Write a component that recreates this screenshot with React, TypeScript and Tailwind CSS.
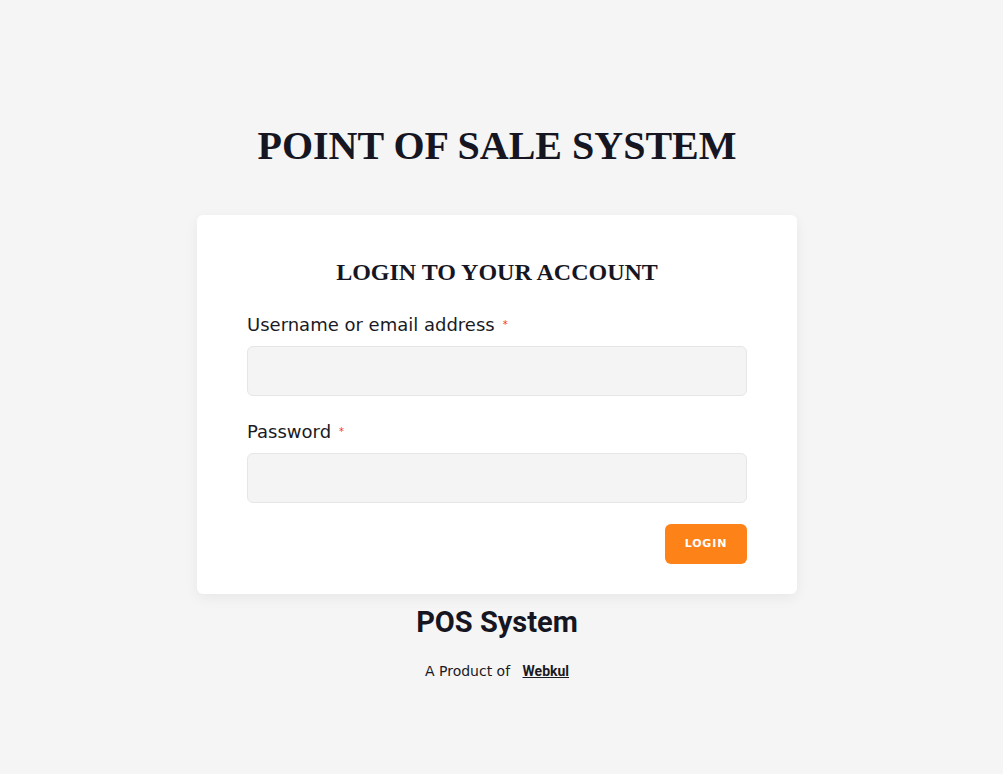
export default function App() {
  return (
    <div className="min-h-[774px] bg-[#f5f5f5] flex flex-col items-center pt-[122px] pr-[9px] font-['DejaVu_Sans',sans-serif] text-[#1a1a24]">
      <h1 className="font-['Liberation_Serif',serif] font-bold text-[40px] leading-[48px] text-[#161622]">
        POINT OF SALE SYSTEM
      </h1>

      <div className="mt-[45px] w-[600px] rounded-md bg-white px-[50px] pt-[42px] pb-[30px] shadow-[0_4px_14px_rgba(0,0,0,0.06)]">
        <h2 className="text-center font-['Liberation_Serif',serif] font-bold text-[24px] leading-[30px] text-[#161622]">
          LOGIN TO YOUR ACCOUNT
        </h2>

        <form className="mt-[25px]">
          <label className="flex items-start gap-2 text-[18px] leading-[26px]">
            Username or email address
            <span className="text-[10px] text-red-500">*</span>
          </label>
          <input className="mt-[8px] block h-[50px] w-full rounded-md border border-[#e6e6e6] bg-[#f4f4f4]" />

          <label className="mt-[23px] flex items-start gap-2 text-[18px] leading-[26px]">
            Password
            <span className="text-[10px] text-red-500">*</span>
          </label>
          <input type="password" className="mt-[8px] block h-[50px] w-full rounded-md border border-[#e6e6e6] bg-[#f4f4f4]" />

          <div className="mt-[21px] flex justify-end">
            <button
              type="button"
              className="h-[40px] w-[82px] rounded-md bg-[#fd8218] text-[11px] font-bold tracking-[0.08em] text-white"
            >
              LOGIN
            </button>
          </div>
        </form>
      </div>

      <div className="mt-[11px] font-['Roboto',sans-serif] text-[29px] font-bold leading-[34px] text-[#161622]">
        POS System
      </div>
      <div className="mt-[22px] text-[14px] leading-[20px]">
        A Product of{" "}
        <a className="ml-2 font-['Roboto',sans-serif] font-bold underline">Webkul</a>
      </div>
    </div>
  );
}
